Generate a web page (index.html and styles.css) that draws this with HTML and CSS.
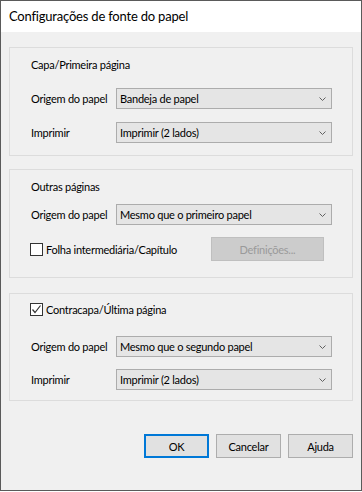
FILE: index.html
```html
<!DOCTYPE html>
<html lang="pt">
<head>
    <meta charset="UTF-8">
    <meta name="viewport" content="width=device-width, initial-scale=1.0">
    <title>Configurações de fonte do papel</title>
    <link rel="stylesheet" href="styles.css">
</head>
<body>

<section class="window">
    <header class="title-bar">Configurações de fonte do papel</header>

    <div class="content">

        <section class="group group-first">
            <div class="caption">Capa/Primeira página</div>
            <div class="row row-a">
                <span class="label">Origem do papel</span>
                <div class="combo"><span>Bandeja de papel</span><svg width="7" height="4" viewBox="0 0 7 4"><path d="M0.5 0.5 L3.5 3.5 L6.5 0.5" /></svg></div>
            </div>
            <div class="row row-b">
                <span class="label">Imprimir</span>
                <div class="combo"><span>Imprimir (2 lados)</span><svg width="7" height="4" viewBox="0 0 7 4"><path d="M0.5 0.5 L3.5 3.5 L6.5 0.5" /></svg></div>
            </div>
        </section>

        <section class="group group-second">
            <div class="caption">Outras páginas</div>
            <div class="row row-a">
                <span class="label">Origem do papel</span>
                <div class="combo"><span>Mesmo que o primeiro papel</span><svg width="7" height="4" viewBox="0 0 7 4"><path d="M0.5 0.5 L3.5 3.5 L6.5 0.5" /></svg></div>
            </div>
            <div class="row row-check">
                <label class="check"><span class="box"></span>Folha intermediária/Capítulo</label>
                <button class="btn btn-disabled" disabled>Definições...</button>
            </div>
        </section>

        <section class="group group-third">
            <div class="caption">
                <label class="check"><span class="box"><svg width="11" height="11" viewBox="0 0 11 11"><path d="M1.5 5.5 L4 8.5 L9.5 1.5" /></svg></span>Contracapa/Última página</label>
            </div>
            <div class="row row-a">
                <span class="label">Origem do papel</span>
                <div class="combo"><span>Mesmo que o segundo papel</span><svg width="7" height="4" viewBox="0 0 7 4"><path d="M0.5 0.5 L3.5 3.5 L6.5 0.5" /></svg></div>
            </div>
            <div class="row row-b">
                <span class="label">Imprimir</span>
                <div class="combo"><span>Imprimir (2 lados)</span><svg width="7" height="4" viewBox="0 0 7 4"><path d="M0.5 0.5 L3.5 3.5 L6.5 0.5" /></svg></div>
            </div>
        </section>

        <div class="actions">
            <button class="btn btn-default">OK</button>
            <button class="btn">Cancelar</button>
            <button class="btn">Ajuda</button>
        </div>

    </div>
</section>

</body>
</html>
```

FILE: styles.css
```css
:root{
    --face: #f0f0f0;
    --group-line: #dcdcdc;
    --control: #e1e1e1;
    --control-line: #adadad;
}

*{
    padding: 0;
    margin: 0;
    box-sizing: border-box;
    font-family: Lato, 'Liberation Sans', sans-serif;
}

body{
    background: #fff;
}

.window{
    width: 362px;
    height: 491px;
    border: 1px solid #5a5a5a;
    background: var(--face);
    display: flex;
    flex-direction: column;
}

.title-bar{
    height: 31px;
    background: #fff;
    padding-left: 8px;
    font-size: 13px;
    letter-spacing: -0.2px;
    line-height: 31px;
    color: #000;
}

.content{
    padding: 15px 8px 0 8px;
    font-size: 11px;
    letter-spacing: -0.25px;
    color: #000;
}

.group{
    border: 1px solid var(--group-line);
    padding: 0 20px 0 21px;
}

.caption{
    display: flex;
    align-items: center;
    height: 32px;
}

.row{
    display: flex;
    align-items: center;
    height: 21px;
}

.label{
    width: 85px;
    flex: none;
    white-space: nowrap;
}

.combo{
    flex: 1;
    height: 21px;
    display: flex;
    align-items: center;
    justify-content: space-between;
    padding: 0 5px 0 3px;
    background: #e5e5e5;
    border: 1px solid #acacac;
}

.combo svg path{
    fill: none;
    stroke: #606060;
    stroke-width: 1;
}

.group-first{
    padding-bottom: 12px;
}
.group-first .row-a{ margin-top: 8px; }
.group-first .row-b{ margin-top: 13px; }

.group-second{
    margin-top: 13px;
    padding-bottom: 16px;
}
.group-second .row-a{ margin-top: 2px; }
.group-second .row-check{
    margin-top: 12px;
    height: 24px;
    justify-content: space-between;
    padding-right: 8px;
    margin-left: -1px;
}

.group-third{
    margin-top: 15px;
    padding-bottom: 10px;
}
.group-third .caption{
    height: 31px;
    margin-left: -1px;
}
.group-third .row-a{ margin-top: 11px; }
.group-third .row-b{ margin-top: 12px; }

.check{
    display: flex;
    align-items: center;
    gap: 3px;
}

.box{
    width: 13px;
    height: 13px;
    border: 1px solid #333;
    background: #fff;
    display: flex;
    align-items: center;
    justify-content: center;
}

.box svg path{
    fill: none;
    stroke: #333;
    stroke-width: 1.2;
}

.btn{
    width: 65px;
    height: 24px;
    font-size: 11px;
    letter-spacing: -0.25px;
    color: #000;
    background: var(--control);
    border: 1px solid var(--control-line);
}

.btn-disabled{
    width: 113px;
    background: #cccccc;
    border-color: #bfbfbf;
    color: #9a9a9a;
}

.btn-default{
    border-color: #0078d7;
    box-shadow: inset 0 0 0 1px #0078d7;
}

.actions{
    display: flex;
    justify-content: flex-end;
    gap: 7px;
    margin-top: 33px;
}
```
